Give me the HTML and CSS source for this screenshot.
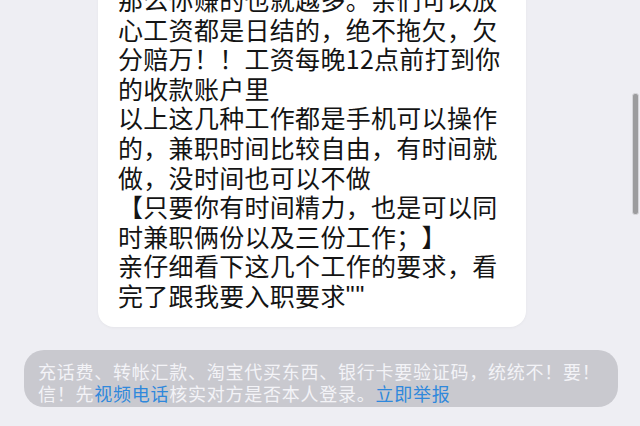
FILE: index.html
```html
<!DOCTYPE html>
<html lang="zh-CN">
<head>
<meta charset="utf-8">
<link rel="stylesheet" href="styles.css">
</head>
<body>
<div class="screen">
  <div class="chat">
    <div class="bubble">
      <div class="line">那么你赚的也就越多。亲们可以放</div>
      <div class="line">心工资都是日结的，绝不拖欠，欠</div>
      <div class="line">分赔万！！工资每晚12点前打到你</div>
      <div class="line">的收款账户里</div>
      <div class="line">以上这几种工作都是手机可以操作</div>
      <div class="line">的，兼职时间比较自由，有时间就</div>
      <div class="line">做，没时间也可以不做</div>
      <div class="line">【只要你有时间精力，也是可以同</div>
      <div class="line">时兼职俩份以及三份工作；】</div>
      <div class="line">亲仔细看下这几个工作的要求，看</div>
      <div class="line">完了跟我要入职要求<span class="quotes">""</span></div>
    </div>
    <div class="notice">
      <div class="nline">充话费、转帐汇款、淘宝代买东西、银行卡要验证码，统统不！要！</div>
      <div class="nline">信！先<span class="link">视频电话</span>核实对方是否本人登录。<span class="link report">立即举报</span></div>
    </div>
  </div>
  <div class="scrollbar"></div>
</div>
</body>
</html>
```
FILE: styles.css
```css
html, body {
  margin: 0;
  padding: 0;
}
body {
  width: 640px;
  height: 426px;
  overflow: hidden;
  background: #eeeef3;
  font-family: "Noto Sans CJK SC", "Noto Sans", sans-serif;
}
.screen {
  position: relative;
  width: 640px;
  height: 426px;
  overflow: hidden;
}
.chat {
  display: flex;
  flex-direction: column;
  margin-top: -29px;
}
.bubble {
  margin-left: 98px;
  width: 428px;
  box-sizing: border-box;
  padding: 14px 0 16px 20px;
  background: #ffffff;
  border-radius: 16px;
  box-shadow: 0 1px 3px rgba(0, 0, 0, 0.04);
}
.line {
  font-size: 25px;
  line-height: 29.6px;
  letter-spacing: 0.3px;
  color: #141414;
  white-space: nowrap;
  text-spacing-trim: space-all;
}
.quotes {
  font-family: "Liberation Sans", sans-serif;
  font-size: 25px;
  letter-spacing: 1px;
  vertical-align: 2px;
}
.notice {
  margin-top: 23px;
  margin-left: 24px;
  width: 594px;
  box-sizing: border-box;
  padding: 10px 0 3px 14px;
  background: #c9c9cf;
  border-radius: 20px;
}
.nline {
  font-size: 18px;
  line-height: 22px;
  letter-spacing: 0.75px;
  color: #f3f3f7;
  white-space: nowrap;
  text-spacing-trim: space-all;
}
.link {
  color: #2f88dc;
}
.scrollbar {
  position: absolute;
  right: 1px;
  top: 93px;
  width: 5px;
  height: 120px;
  background: #9c9c9e;
  border: 1px solid #d6d6da;
  border-radius: 3px;
}
```
